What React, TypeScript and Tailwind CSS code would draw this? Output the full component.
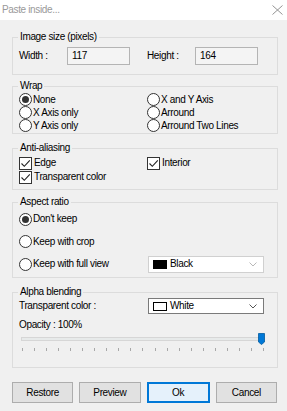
import type { ReactNode } from 'react';

const font = { fontFamily: '"Liberation Sans", Arial, sans-serif' };

function Group({ title, className, children }: { title: string; className: string; children: ReactNode }) {
  return (
    <div className={`relative border border-[#dcdcdc] ${className}`}>
      <span className="absolute left-[5px] top-[-7px] bg-[#f0f0f0] px-[2px] leading-[12px]">{title}</span>
      {children}
    </div>
  );
}

function Radio({ label, checked }: { label: string; checked?: boolean }) {
  return (
    <div className="flex items-center">
      <span className="flex h-[13px] w-[13px] items-center justify-center rounded-full border border-[#333] bg-white">
        {checked && <span className="h-[7px] w-[7px] rounded-full bg-[#333]" />}
      </span>
      <span className="ml-[1px]">{label}</span>
    </div>
  );
}

function Check({ label }: { label: string }) {
  return (
    <div className="flex items-center">
      <span className="flex h-[13px] w-[13px] items-center justify-center border border-[#333] bg-white">
        <svg width="11" height="11" viewBox="0 0 11 11" fill="none">
          <path d="M1.5 5.5l2.8 2.8L9.8 2.3" stroke="#222" strokeWidth="1.1" />
        </svg>
      </span>
      <span className="ml-[2px]">{label}</span>
    </div>
  );
}

function Combo({ swatch, label, dim }: { swatch: 'black' | 'white'; label: string; dim?: boolean }) {
  return (
    <div
      className={`flex w-[116px] items-center bg-white pl-[4px] pr-[6px] ${
        dim ? 'h-[17px] border border-[#d0d0d0]' : 'h-[16px] border border-[#7a7a7a]'
      }`}
    >
      <span
        className={`h-[9px] w-[14px] ${swatch === 'black' ? 'bg-black' : 'border border-black bg-white'}`}
      />
      <span className="ml-[3px] flex-1">{label}</span>
      <svg width="8" height="5" viewBox="0 0 8 5" fill="none">
        <path d="M0.5 0.5L4 4L7.5 0.5" stroke={dim ? '#b8b8b8' : '#555'} strokeWidth="1" />
      </svg>
    </div>
  );
}

function Button({ label, primary }: { label: string; primary?: boolean }) {
  return (
    <button
      className={`h-[21px] flex-1 leading-[12px] text-black ${
        primary ? 'border-2 border-[#0078d7] bg-[#e5f1fb]' : 'border border-[#adadad] bg-[#e1e1e1]'
      }`}
    >
      {label}
    </button>
  );
}

export default function App() {
  const ticks = Array.from({ length: 21 }, (_, i) => i);

  return (
    <div className="h-[411px] w-[287px] overflow-hidden bg-[#f0f0f0] text-[10px] leading-[12px] tracking-[-0.35px] text-black" style={font}>
      <div className="flex h-[20px] items-center justify-between bg-white pl-[2px] pr-[4px]">
        <span className="text-[10px] text-[#999]">Paste inside...</span>
        <svg width="11" height="10" viewBox="0 0 11 10" fill="none">
          <path d="M0.5 0.5L10.5 9.5M10.5 0.5L0.5 9.5" stroke="#888" strokeWidth="0.9" />
        </svg>
      </div>

      <div className="pl-[12px] pr-[9px]">
        <Group title="Image size (pixels)" className="mt-[17px] h-[38px]">
          <div className="flex items-center pl-[6px] pt-[9px]">
            <span className="w-[48px]">Width :</span>
            <div className="flex h-[18px] w-[63px] items-center border border-[#b4b4b4] bg-[#f4f4f4] pl-[4px]">117</div>
            <span className="ml-[17px] w-[48px]">Height :</span>
            <div className="flex h-[18px] w-[63px] items-center border border-[#b4b4b4] bg-[#f4f4f4] pl-[4px]">164</div>
          </div>
        </Group>

        <Group title="Wrap" className="mt-[11px] h-[48px]">
          <div className="grid grid-cols-[128px_1fr] pl-[6px] pt-[6px] [&>*]:h-[13px]">
            <Radio label="None" checked />
            <Radio label="X and Y Axis" />
            <Radio label="X Axis only" />
            <Radio label="Arround" />
            <Radio label="Y Axis only" />
            <Radio label="Arround Two Lines" />
          </div>
        </Group>

        <Group title="Anti-aliasing" className="mt-[14px] h-[42px]">
          <div className="grid grid-cols-[128px_1fr] pl-[6px] pt-[7px] [&>*]:h-[14px]">
            <Check label="Edge" />
            <Check label="Interior" />
            <Check label="Transparent color" />
          </div>
        </Group>

        <Group title="Aspect ratio" className="mt-[12px] h-[76px]">
          <div className="flex flex-col pl-[6px] pt-[5px]">
            <div className="flex h-[22px] items-center">
              <Radio label="Don't keep" checked />
            </div>
            <div className="flex h-[23px] items-center">
              <Radio label="Keep with crop" />
            </div>
            <div className="flex h-[22px] items-center">
              <div className="w-[129px]">
                <Radio label="Keep with full view" />
              </div>
              <Combo swatch="black" label="Black" dim />
            </div>
          </div>
        </Group>

        <Group title="Alpha blending" className="mt-[14px] h-[76px]">
          <div className="flex flex-col pt-[5px]">
            <div className="flex items-center pl-[6px]">
              <span className="w-[129px]">Transparent color :</span>
              <Combo swatch="white" label="White" />
            </div>
            <div className="mt-[5px] pl-[6px]">Opacity : 100%</div>
            <div className="relative ml-[8px] mr-[13px] mt-[6px] h-[4px] border border-[#d6d6d6] bg-[#e7eaea]">
              <svg className="absolute right-[-2px] top-[-5px]" width="7" height="12" viewBox="0 0 7 12">
                <path d="M0.5 0.5H6.5V9L3.5 11.5L0.5 9Z" fill="#0078d7" stroke="#005a9e" strokeWidth="0.8" />
              </svg>
            </div>
            <div className="ml-[9px] mt-[7px] flex w-[242px] justify-between">
              {ticks.map((t) => (
                <span key={t} className="h-[3px] w-[1px] bg-[#a8a8a8]" />
              ))}
            </div>
          </div>
        </Group>

        <div className="mt-[14px] flex gap-[6px] pr-[1px]">
          <Button label="Restore" />
          <Button label="Preview" />
          <Button label="Ok" primary />
          <Button label="Cancel" />
        </div>
      </div>
    </div>
  );
}
